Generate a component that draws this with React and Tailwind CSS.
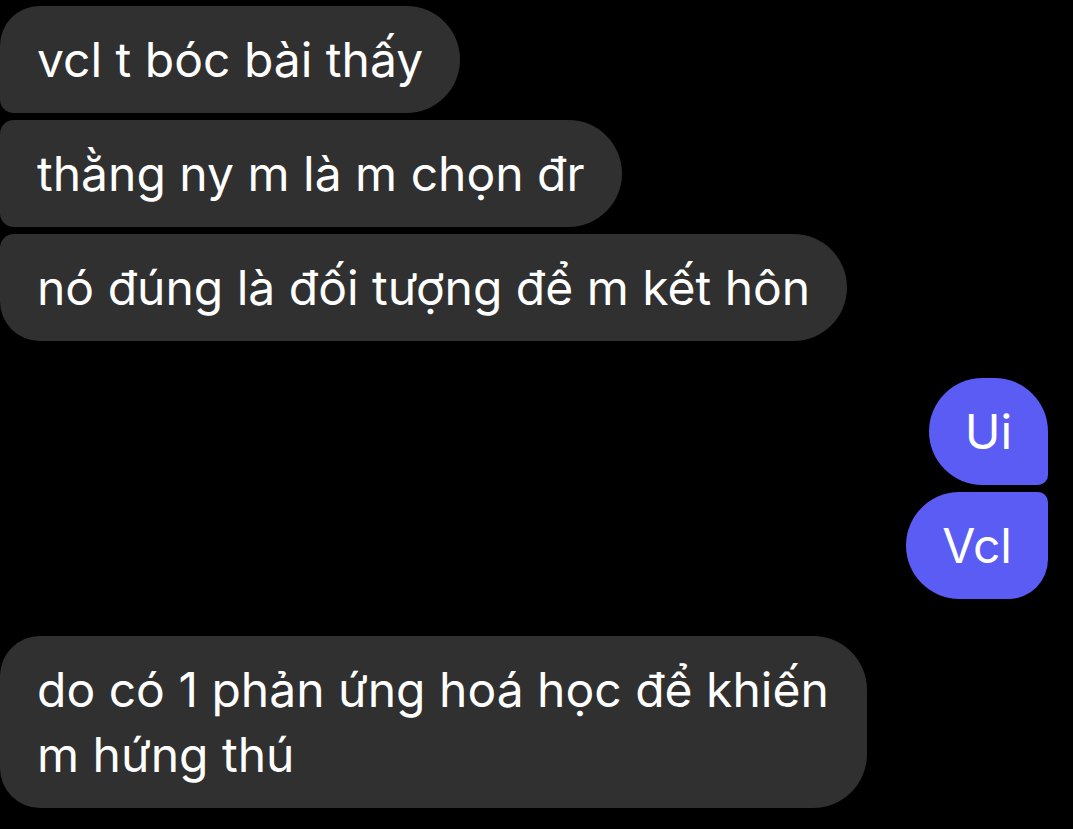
const them = "bg-[#303030] text-white self-start px-[37px] py-[21px]";
const me = "bg-[#5a5cf3] text-white self-end px-[36px] py-[21px]";

export default function App() {
    return (
        <div
            className="w-[1073px] h-[829px] bg-black overflow-hidden flex flex-col pt-[6px] pr-[25px] text-[48px] leading-[65px]"
            style={{ fontFamily: "Inter, 'Noto Sans', sans-serif" }}
        >
            <div className={`${them} rounded-tl-[40px] rounded-tr-[54px] rounded-br-[54px] rounded-bl-[14px]`}>
                vcl t bóc bài thấy
            </div>
            <div className={`${them} mt-[7px] rounded-tl-[14px] rounded-tr-[54px] rounded-br-[54px] rounded-bl-[14px]`}>
                thằng ny m là m chọn đr
            </div>
            <div className={`${them} mt-[7px] rounded-tl-[14px] rounded-tr-[54px] rounded-br-[54px] rounded-bl-[40px]`}>
                nó đúng là đối tượng để m kết hôn
            </div>

            <div className={`${me} mt-[37px] rounded-tl-[54px] rounded-tr-[54px] rounded-br-[10px] rounded-bl-[54px]`}>
                Ui
            </div>
            <div className={`${me} mt-[7px] rounded-tl-[54px] rounded-tr-[10px] rounded-br-[40px] rounded-bl-[54px]`}>
                Vcl
            </div>

            <div className={`${them} mt-[37px] max-w-[867px] rounded-tl-[40px] rounded-tr-[54px] rounded-br-[54px] rounded-bl-[40px]`}>
                do có 1 phản ứng hoá học để khiến m hứng thú
            </div>
        </div>
    );
}
